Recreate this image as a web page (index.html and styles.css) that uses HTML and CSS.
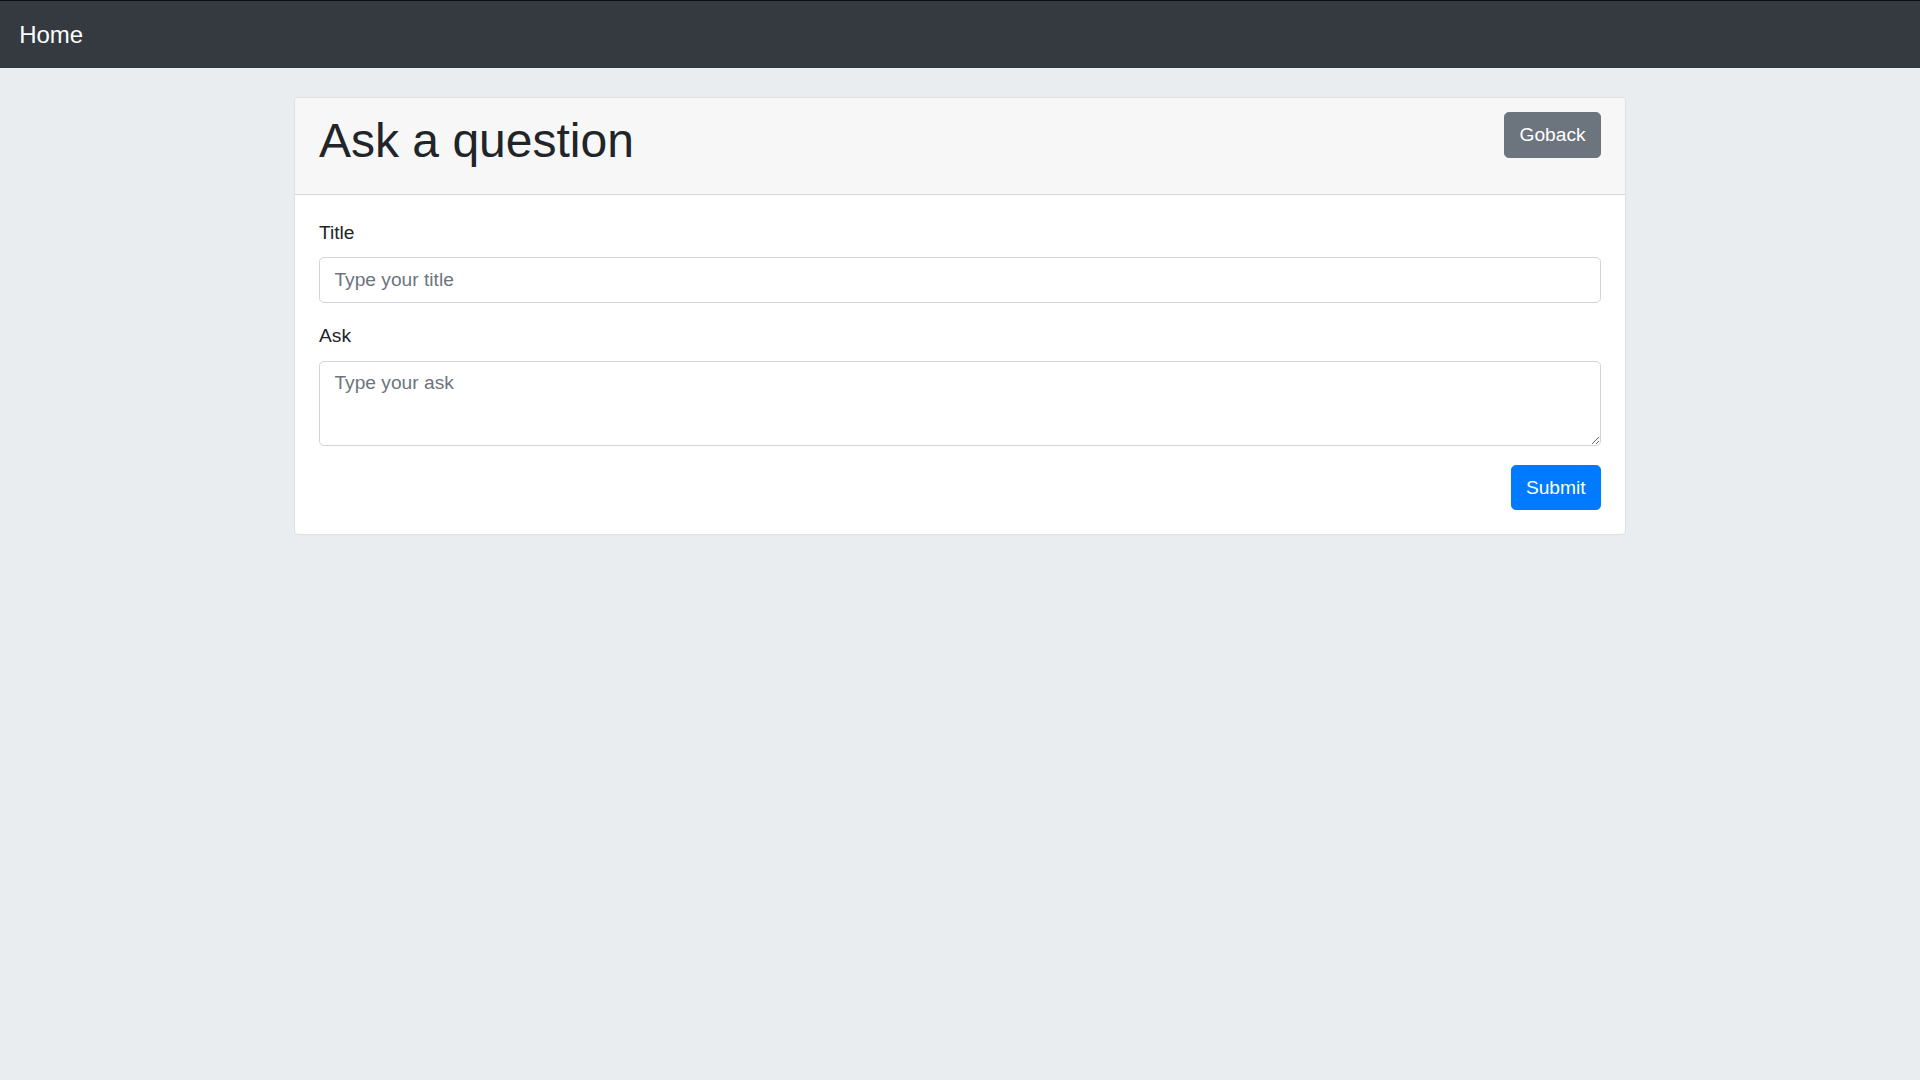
FILE: index.html
```html
<!DOCTYPE html>
<html lang="en">
<head>
<meta charset="utf-8">
<title>Ask a question</title>
<link rel="stylesheet" href="styles.css">
</head>
<body>
<nav class="navbar">
  <a class="navbar-brand" href="#">Home</a>
</nav>
<main class="container">
  <div class="card">
    <div class="card-header">
      <h1 class="card-title">Ask a question</h1>
      <button class="btn btn-secondary" type="button">Goback</button>
    </div>
    <form class="card-body">
      <div class="form-group">
        <label class="form-label" for="title">Title</label>
        <input class="form-control" id="title" type="text" placeholder="Type your title">
      </div>
      <div class="form-group">
        <label class="form-label" for="ask">Ask</label>
        <textarea class="form-control textarea" id="ask" placeholder="Type your ask"></textarea>
      </div>
      <div class="actions">
        <button class="btn btn-primary" type="submit">Submit</button>
      </div>
    </form>
  </div>
</main>
</body>
</html>
```
FILE: styles.css
```css
* { box-sizing: border-box; }
html, body { margin: 0; padding: 0; }
body {
  background: #eaedf0;
  color: #212529;
  font-family: "Liberation Sans", Arial, sans-serif;
  font-size: 19.2px;
  line-height: 1.5;
  min-height: 1080px;
}
.navbar {
  background: #343a40;
  border-top: 1px solid #0e0f11;
  padding: 9.6px 19.2px;
  display: flex;
  align-items: center;
  height: 68px;
}
.navbar-brand {
  color: #fff;
  font-size: 24px;
  line-height: 36px;
  padding: 6px 0;
  text-decoration: none;
}
.container {
  width: 1332px;
  margin: 29px auto 0;
}
.card {
  background: #fff;
  border: 1px solid rgba(0,0,0,.125);
  border-radius: 4.8px;
  overflow: hidden;
}
.card-header {
  background: #f7f7f7;
  border-bottom: 1px solid rgba(0,0,0,.125);
  padding: 14.4px 24px;
  display: flex;
  justify-content: space-between;
  align-items: flex-start;
}
.card-title {
  margin: 0 0 9.6px;
  font-size: 48px;
  font-weight: 500;
  line-height: 1.2;
  color: #212529;
}
.card-body {
  padding: 24px;
  display: block;
}
.form-group { margin-bottom: 19.2px; }
.form-label {
  display: inline-block;
  margin-bottom: 9.6px;
  line-height: 28.8px;
}
.form-control {
  display: block;
  width: 100%;
  height: 45.6px;
  padding: 7.2px 14.4px;
  font-family: inherit;
  font-size: 19.2px;
  line-height: 1.5;
  color: #495057;
  background: #fff;
  border: 1.2px solid #ced4da;
  border-radius: 4.8px;
  outline: none;
}
.form-control::placeholder { color: #6c757d; opacity: 1; }
.textarea {
  height: 85.6px;
  resize: vertical;
}
.actions {
  display: flex;
  justify-content: flex-end;
}
.btn {
  font-family: inherit;
  font-size: 19.2px;
  line-height: 1.5;
  padding: 7.2px 14.4px;
  border: 1.2px solid transparent;
  border-radius: 4.8px;
  color: #fff;
  cursor: pointer;
}
.btn-secondary { background: #6c757d; border-color: #6c757d; }
.btn-primary { background: #007bff; border-color: #007bff; }
```
